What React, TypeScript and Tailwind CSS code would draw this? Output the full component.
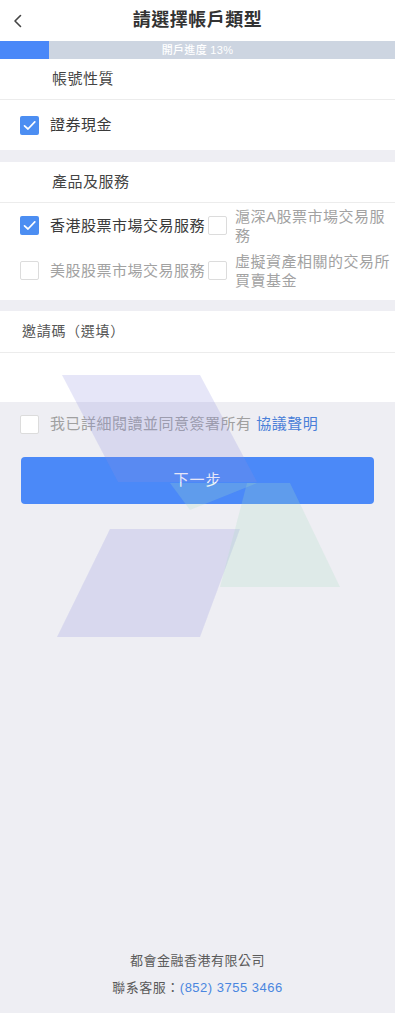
import React, { useState } from "react";

const FONT = { fontFamily: '"Liberation Sans", "Noto Sans CJK TC", sans-serif' };

const Box = ({ checked }: { checked: boolean }) => (
  <span
    className={`flex h-[19px] w-[19px] shrink-0 items-center justify-center rounded-[2px] ${
      checked ? "bg-[#4c8ef2]" : "border border-[#dcdcdc] bg-white"
    }`}
  >
    {checked && (
      <svg width="15" height="15" viewBox="0 0 15 15" fill="none">
        <polyline points="2.5,7.8 6,11 12.8,3.8" stroke="#fff" strokeWidth="1.7" strokeLinecap="round" strokeLinejoin="round" />
      </svg>
    )}
  </span>
);

const services = [
  { id: "hk", label: "香港股票市場交易服務", on: true },
  { id: "a", label: "滬深A股票市場交易服務", on: false },
  { id: "us", label: "美股股票市場交易服務", on: false },
  { id: "va", label: "虛擬資產相關的交易所買賣基金", on: false },
];

export default function App() {
  const [agree, setAgree] = useState(false);
  const [code, setCode] = useState("");

  return (
    <div className="relative flex min-h-screen flex-col overflow-hidden bg-[#eeeef3]" style={FONT}>
      {/* header */}
      <div className="grid h-[41px] grid-cols-[40px_1fr_40px] items-center bg-white">
        <button className="flex h-full items-center pl-[12px]">
          <svg width="12" height="14" viewBox="0 0 12 14" fill="none">
            <polyline points="8.5,1.5 3,7 8.5,12.5" stroke="#444" strokeWidth="1.6" strokeLinecap="round" strokeLinejoin="round" />
          </svg>
        </button>
        <h1 className="text-center text-[18px] font-bold tracking-[0.5px] text-[#333]">請選擇帳戶類型</h1>
        <span />
      </div>

      {/* progress */}
      <div className="relative flex h-[18px] items-center justify-center bg-[#cdd5e1]">
        <div className="absolute left-0 top-0 h-full w-[49px] bg-[#4a88f8]" />
        <span className="relative text-[11px] font-medium tracking-[0.3px] text-white">開戶進度 13%</span>
      </div>

      {/* account type */}
      <div className="bg-white">
        <div className="flex h-[41px] items-center border-b border-[#ececec] pl-[52px] text-[15px] tracking-[0.5px] text-[#444]">
          帳號性質
        </div>
        <div className="flex h-[50px] items-center gap-[11px] pl-[20px] text-[15px] tracking-[0.5px] text-[#3a3a3a]">
          <Box checked />
          <span>證券現金</span>
        </div>
      </div>

      {/* services */}
      <div className="mt-[12px] bg-white pb-[7px]">
        <div className="flex h-[41px] items-center border-b border-[#ececec] pl-[52px] text-[15px] tracking-[0.5px] text-[#444]">
          產品及服務
        </div>
        <div className="grid grid-cols-[188px_1fr] pl-[20px]">
          {services.map((s, i) => (
            <div key={s.id} className="flex h-[45px] items-center">
              <Box checked={s.on} />
              <span
                className={`text-[15px] leading-[19px] tracking-[0.5px] ${i % 2 === 0 ? "ml-[11px]" : "ml-[8px] w-[158px]"} ${
                  s.on ? "text-[#3a3a3a]" : "text-[#a2a2a2]"
                }`}
              >
                {s.label}
              </span>
            </div>
          ))}
        </div>
      </div>

      {/* invitation code */}
      <div className="mt-[11px] bg-white">
        <div className="flex h-[42px] items-center border-b border-[#ececec] pl-[22px] text-[14px] tracking-[0.7px] text-[#555]">
          邀請碼（選填）
        </div>
        <input
          value={code}
          onChange={(e) => setCode(e.target.value)}
          className="block h-[49px] w-full bg-white px-[22px] text-[15px] outline-none"
        />
      </div>

      {/* agreement */}
      <label className="flex h-[44px] cursor-pointer items-center gap-[11px] pl-[20px] text-[15px] tracking-[0.5px] text-[#a0a0a0]">
        <input type="checkbox" className="hidden" checked={agree} onChange={() => setAgree(!agree)} />
        <Box checked={agree} />
        <span>
          我已詳細閱讀並同意簽署所有 <span className="text-[#4a7fd8]">協議聲明</span>
        </span>
      </label>

      <button className="mx-[21px] mt-[11px] h-[47px] rounded-[4px] bg-[#4b89f8] text-[15px] tracking-[1px] text-white">
        下一步
      </button>

      {/* footer */}
      <div className="mt-auto pb-[12px] text-center text-[13px] leading-[27px] tracking-[0.5px] text-[#5a5a5a]">
        <div>都會金融香港有限公司</div>
        <div>
          聯系客服：<span className="text-[#4a86e0]">(852) 3755 3466</span>
        </div>
      </div>

      {/* watermark */}
      <svg className="pointer-events-none absolute left-0 top-0" width="395" height="660" viewBox="0 0 395 660">
        <polygon points="62,375 200,375 257,482 118,482" fill="rgba(140,140,225,0.22)" />
        <polygon points="110,529 240,529 200,637 57,637" fill="rgba(140,140,225,0.22)" />
        <polygon points="247,483 290,483 340,587 220,587" fill="rgba(168,223,198,0.22)" />
        <polygon points="170,483 257,483 190,510" fill="rgba(168,223,198,0.22)" />
      </svg>
    </div>
  );
}
